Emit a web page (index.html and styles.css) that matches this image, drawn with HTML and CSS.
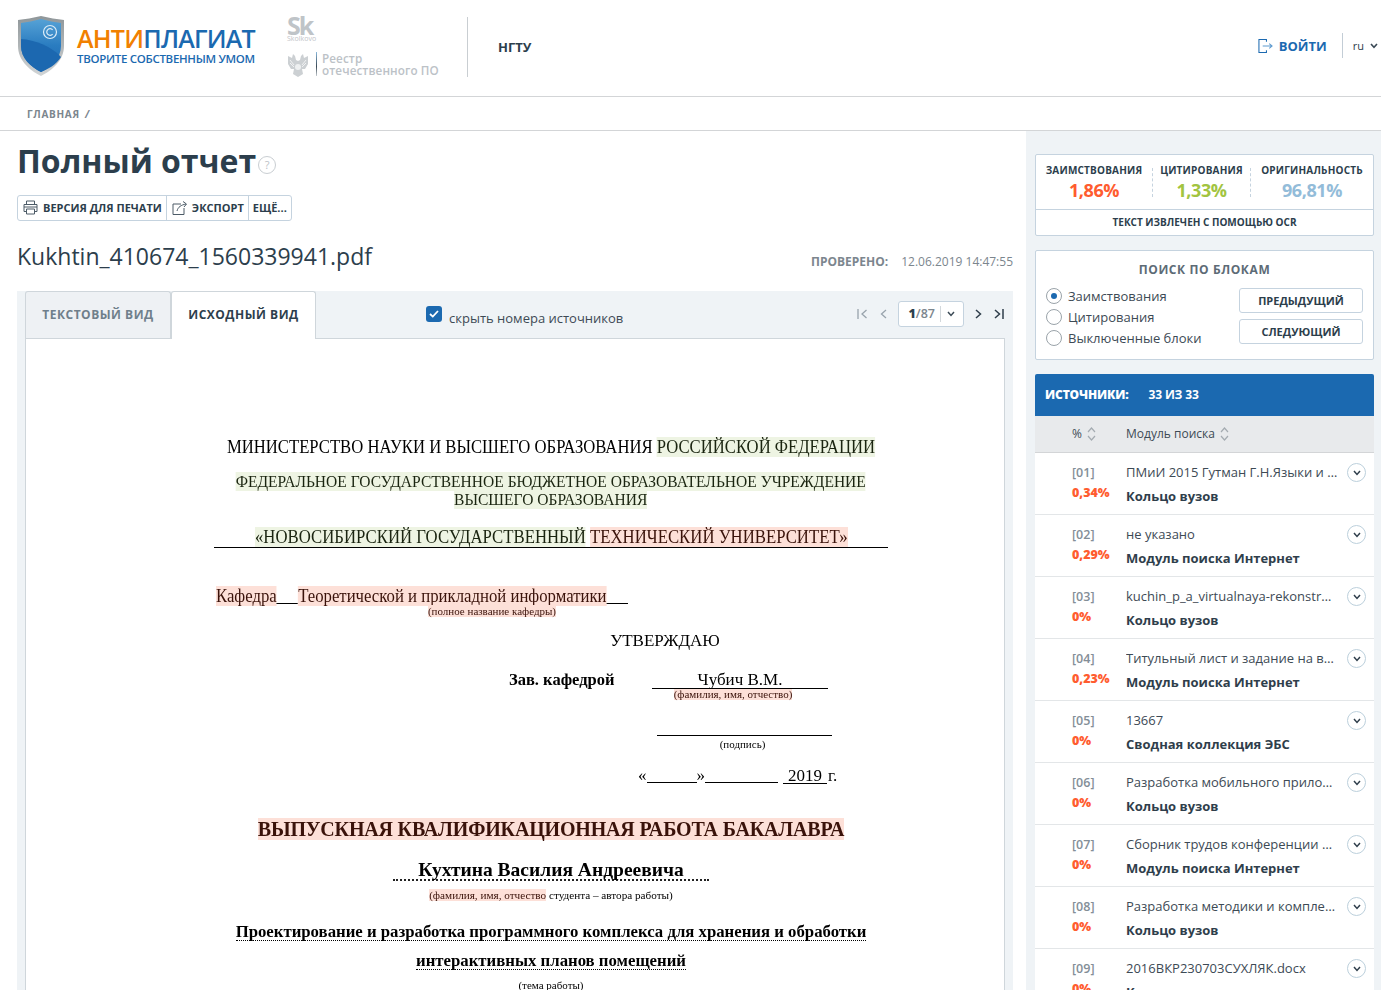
FILE: index.html
```html
<!DOCTYPE html><html lang="ru">
<head>
  <meta charset="UTF-8" />
  <meta name="viewport" content="width=device-width, initial-scale=1.0" />
  <title>Полный отчет</title>
  <link rel="stylesheet" href="styles.css">
</head>
<body>
  <header class="topbar">
    <div class="logo">
      <svg class="shield" width="48" height="62" viewBox="0 0 48 62">
        <defs>
          <linearGradient id="rim" x1="0" y1="0" x2="0" y2="1"><stop offset="0" stop-color="#8f9699"/><stop offset="1" stop-color="#d2d5d6"/></linearGradient>
          <linearGradient id="blue" x1="0" y1="0" x2="0" y2="1"><stop offset="0" stop-color="#56a2d6"/><stop offset="0.5" stop-color="#2a7cc0"/><stop offset="1" stop-color="#1c68b0"/></linearGradient>
        </defs>
        <path d="M24 1 C32 3 40 4 47 5 L47 31 C47 45 36 55 24 61 C12 55 1 45 1 31 L1 5 C8 4 16 3 24 1 Z" fill="url(#rim)"/>
        <path d="M24 4 C31 6 38 7 44 8 L44 31 C44 43 34 52 24 57 C14 52 4 43 4 31 L4 8 C10 7 17 6 24 4 Z" fill="url(#blue)"/>
        <path d="M4 24 C18 25 34 31 44 42 C39 50 31 54 24 57 C14 52 4 43 4 31 Z" fill="#1c68b0"/>
        <circle cx="33" cy="17" r="6.5" fill="none" stroke="#dcecf7" stroke-width="1.2"/>
        <path d="M35.6 14.9 A3.3 3.3 0 1 0 35.6 19.1" fill="none" stroke="#dcecf7" stroke-width="1.2"/>
      </svg>
      <div class="logo-text">
        <div class="logo-name"><span class="orange">АНТИ</span>ПЛАГИАТ</div>
        <div class="logo-tag">ТВОРИТЕ СОБСТВЕННЫМ УМОМ</div>
      </div>
    </div>
    <div class="partners">
      <div class="sk">Sk<small>Skolkovo</small></div>
      <div class="registry">
        <svg width="22" height="24" viewBox="0 0 22 24">
          <path d="M6 1 L8 3 L9 7 L11 8 L13 7 L14 3 L16 1 L17 5 L21 3 L21 11 L18 16 L15 16 L16 21 L11 24 L6 21 L7 16 L4 16 L1 11 L1 3 L5 5 Z" fill="#ccd0d3"/>
          <path d="M3 7 L7 12 M3 10 L7 14 M19 7 L15 12 M19 10 L15 14" stroke="#f1f2f3" fill="none"/>
          <circle cx="11" cy="14" r="3" fill="#eef0f1"/>
        </svg>
        <div class="registry-text">Реестр<br>отечественного ПО</div>
      </div>
    </div>
    <div class="org">НГТУ</div>
    <div class="login">
      <svg width="15" height="16" viewBox="0 0 16 16" fill="none" stroke="#1b69b0" stroke-width="1.1">
        <path d="M9 3.5 V1 H1 V15 H9 V12.5"/>
        <path d="M5 8 H15 M12 5.5 L15 8 L12 10.5" stroke="#5f9bd0"/>
      </svg>
      <span>ВОЙТИ</span>
    </div>
    <div class="lang">ru
      <svg width="8" height="6" viewBox="0 0 8 6" fill="none" stroke="#3b4a56" stroke-width="1.6"><path d="M1 1 L4 4.4 L7 1"/></svg>
    </div>
  </header>

  <nav class="crumbs">ГЛАВНАЯ <span>/</span></nav>

  <div class="content">
    <main class="report">
      <div class="title-row">
        <h1>Полный отчет</h1>
        <span class="help">?</span>
      </div>

      <div class="actions">
        <div class="action">
          <svg width="15" height="15" viewBox="0 0 15 15" fill="none" stroke="#4c5b67" stroke-width="1">
            <path d="M3.5 4.5 V1 H11.5 V4.5 M3.5 11.5 H1 V4.5 H14 V11.5 H11.5"/>
            <path d="M3.5 9 H11.5 V14 H3.5 Z M1 7 H14"/>
          </svg>
          ВЕРСИЯ ДЛЯ ПЕЧАТИ
        </div>
        <div class="action">
          <svg width="15" height="14" viewBox="0 0 15 14" fill="none" stroke="#4c5b67" stroke-width="1">
            <path d="M9 3 H1 V13.5 H12 V7"/>
            <path d="M5 10 C6 6 9 4 14 3 M11 0.5 L14.5 3 L12 6"/>
          </svg>
          ЭКСПОРТ
        </div>
        <div class="action">ЕЩЁ...</div>
      </div>

      <div class="file-row">
        <div class="file-name">Kukhtin_410674_1560339941.pdf</div>
        <div class="checked"><b>ПРОВЕРЕНО:</b><span>12.06.2019 14:47:55</span></div>
      </div>

      <section class="viewer">
        <div class="viewer-bar">
          <div class="tab">ТЕКСТОВЫЙ ВИД</div>
          <div class="tab active">ИСХОДНЫЙ ВИД</div>
          <label class="hide-nums">
            <span class="checkbox">
              <svg width="10" height="8" viewBox="0 0 10 8" fill="none" stroke="#fff" stroke-width="1.8"><path d="M1 4 L3.8 6.6 L9 1"/></svg>
            </span>
            скрыть номера источников
          </label>
          <div class="pager">
            <svg width="11" height="10" viewBox="0 0 11 10" fill="none" stroke="#98a3ac" stroke-width="1.3"><path d="M1 0 V10 M9.5 1 L5 5 L9.5 9"/></svg>
            <svg class="prev" width="7" height="10" viewBox="0 0 7 10" fill="none" stroke="#98a3ac" stroke-width="1.3"><path d="M6 1 L1.5 5 L6 9"/></svg>
            <div class="page-select">
              <span class="page-num"><b>1</b>/87</span>
              <svg width="8" height="6" viewBox="0 0 8 6" fill="none" stroke="#3b4a56" stroke-width="1.5"><path d="M1 1 L4 4.4 L7 1"/></svg>
            </div>
            <svg class="next" width="7" height="10" viewBox="0 0 7 10" fill="none" stroke="#2f3e4b" stroke-width="1.5"><path d="M1 1 L5.5 5 L1 9"/></svg>
            <svg class="last" width="10" height="10" viewBox="0 0 10 10" fill="none" stroke="#2f3e4b" stroke-width="1.5"><path d="M1 1 L5.5 5 L1 9 M9 0 V10"/></svg>
          </div>
        </div>

        <article class="page">
          <div class="line l-ministry"><span class="sq">МИНИСТЕРСТВО НАУКИ И ВЫСШЕГО ОБРАЗОВАНИЯ <mark class="g">РОССИЙСКОЙ ФЕДЕРАЦИИ</mark></span></div>
          <div class="line l-federal"><span class="sq"><mark class="g">ФЕДЕРАЛЬНОЕ ГОСУДАРСТВЕННОЕ БЮДЖЕТНОЕ ОБРАЗОВАТЕЛЬНОЕ УЧРЕЖДЕНИЕ</mark></span></div>
          <div class="line l-higher"><span class="sq"><mark class="g">ВЫСШЕГО ОБРАЗОВАНИЯ</mark></span></div>
          <div class="line l-uni"><div class="uni"><span class="sq"><mark class="g">«НОВОСИБИРСКИЙ ГОСУДАРСТВЕННЫЙ</mark> <mark class="r">ТЕХНИЧЕСКИЙ УНИВЕРСИТЕТ»</mark></span></div></div>
          <div class="line l-dept"><span class="sq"><mark class="r">Кафедра</mark><u class="fill-a"></u><mark class="r">Теоретической и прикладной информатики</mark><u class="fill-b"></u></span></div>
          <div class="line l-small l-dept-note"><mark class="r">(полное название кафедры)</mark></div>
          <div class="line l-approve">УТВЕРЖДАЮ</div>
          <div class="line l-head"><b>Зав. кафедрой</b><span class="head-name">Чубич В.М.</span></div>
          <div class="line l-small l-head-note"><mark class="r">(фамилия, имя, отчество)</mark></div>
          <div class="sign-line"></div>
          <div class="line l-small l-sign-note">(подпись)</div>
          <div class="line l-date">«<u class="fill-c"></u>»<u class="fill-d"></u><u class="year">2019</u>г.</div>
          <div class="line l-work"><mark class="r">ВЫПУСКНАЯ КВАЛИФИКАЦИОННАЯ РАБОТА БАКАЛАВРА</mark></div>
          <div class="line l-student"><span class="student">Кухтина Василия Андреевича</span></div>
          <div class="line l-small l-student-note"><mark class="r">(фамилия, имя, отчество</mark> студента – автора работы)</div>
          <div class="line l-topic"><span class="dots">Проектирование и разработка программного комплекса для хранения и обработки</span></div>
          <div class="line l-topic2"><span class="dots">интерактивных планов помещений</span></div>
          <div class="line l-small l-topic-note">(тема работы)</div>
        </article>
      </section>
    </main>

    <aside class="side">
      <div class="card stats">
        <div class="stat-row">
          <div class="stat"><div class="stat-name">ЗАИМСТВОВАНИЯ</div><div class="stat-val red">1,86%</div></div>
          <i class="stat-sep"></i>
          <div class="stat"><div class="stat-name">ЦИТИРОВАНИЯ</div><div class="stat-val green">1,33%</div></div>
          <i class="stat-sep"></i>
          <div class="stat"><div class="stat-name">ОРИГИНАЛЬНОСТЬ</div><div class="stat-val blue">96,81%</div></div>
        </div>
        <div class="ocr">ТЕКСТ ИЗВЛЕЧЕН С ПОМОЩЬЮ OCR</div>
      </div>

      <div class="card blocks">
        <div class="blocks-title">ПОИСК ПО БЛОКАМ</div>
        <div class="blocks-body">
          <div class="radios">
            <div class="radio on"><i></i>Заимствования</div>
            <div class="radio"><i></i>Цитирования</div>
            <div class="radio"><i></i>Выключенные блоки</div>
          </div>
          <div class="block-btns">
            <div class="btn">ПРЕДЫДУЩИЙ</div>
            <div class="btn">СЛЕДУЮЩИЙ</div>
          </div>
        </div>
      </div>

      <div class="sources-head"><b>ИСТОЧНИКИ:</b><span>33 ИЗ 33</span></div>
      <div class="sources-cols">
        <div class="col-pct">%
          <svg width="9" height="16" viewBox="0 0 9 16" fill="none" stroke="#a4abb1" stroke-width="1.2"><path d="M1 6 L4.5 2 L8 6 M1 10 L4.5 14 L8 10"/></svg>
        </div>
        <div class="col-mod">Модуль поиска
          <svg width="9" height="16" viewBox="0 0 9 16" fill="none" stroke="#a4abb1" stroke-width="1.2"><path d="M1 6 L4.5 2 L8 6 M1 10 L4.5 14 L8 10"/></svg>
        </div>
      </div>

      <div class="source"><div class="src-num">[01]<b>0,34%</b></div><div class="src-main"><div class="src-title">ПМиИ 2015 Гутман Г.Н.Языки и программирование</div><div class="src-mod">Кольцо вузов</div></div><span class="toggle"><svg width="8" height="6" viewBox="0 0 8 6" fill="none" stroke="#2f3e4b" stroke-width="1.5"><path d="M1 1 L4 4.4 L7 1"/></svg></span></div>
      <div class="source"><div class="src-num">[02]<b>0,29%</b></div><div class="src-main"><div class="src-title">не указано</div><div class="src-mod">Модуль поиска Интернет</div></div><span class="toggle"><svg width="8" height="6" viewBox="0 0 8 6" fill="none" stroke="#2f3e4b" stroke-width="1.5"><path d="M1 1 L4 4.4 L7 1"/></svg></span></div>
      <div class="source"><div class="src-num">[03]<b>0%</b></div><div class="src-main"><div class="src-title">kuchin_p_a_virtualnaya-rekonstruktsiya-obektov</div><div class="src-mod">Кольцо вузов</div></div><span class="toggle"><svg width="8" height="6" viewBox="0 0 8 6" fill="none" stroke="#2f3e4b" stroke-width="1.5"><path d="M1 1 L4 4.4 L7 1"/></svg></span></div>
      <div class="source"><div class="src-num">[04]<b>0,23%</b></div><div class="src-main"><div class="src-title">Титульный лист и задание на выпускную работу</div><div class="src-mod">Модуль поиска Интернет</div></div><span class="toggle"><svg width="8" height="6" viewBox="0 0 8 6" fill="none" stroke="#2f3e4b" stroke-width="1.5"><path d="M1 1 L4 4.4 L7 1"/></svg></span></div>
      <div class="source"><div class="src-num">[05]<b>0%</b></div><div class="src-main"><div class="src-title">13667</div><div class="src-mod">Сводная коллекция ЭБС</div></div><span class="toggle"><svg width="8" height="6" viewBox="0 0 8 6" fill="none" stroke="#2f3e4b" stroke-width="1.5"><path d="M1 1 L4 4.4 L7 1"/></svg></span></div>
      <div class="source"><div class="src-num">[06]<b>0%</b></div><div class="src-main"><div class="src-title">Разработка мобильного приложения для планшетов</div><div class="src-mod">Кольцо вузов</div></div><span class="toggle"><svg width="8" height="6" viewBox="0 0 8 6" fill="none" stroke="#2f3e4b" stroke-width="1.5"><path d="M1 1 L4 4.4 L7 1"/></svg></span></div>
      <div class="source"><div class="src-num">[07]<b>0%</b></div><div class="src-main"><div class="src-title">Сборник трудов конференции молодых ученых</div><div class="src-mod">Модуль поиска Интернет</div></div><span class="toggle"><svg width="8" height="6" viewBox="0 0 8 6" fill="none" stroke="#2f3e4b" stroke-width="1.5"><path d="M1 1 L4 4.4 L7 1"/></svg></span></div>
      <div class="source"><div class="src-num">[08]<b>0%</b></div><div class="src-main"><div class="src-title">Разработка методики и комплекса программ</div><div class="src-mod">Кольцо вузов</div></div><span class="toggle"><svg width="8" height="6" viewBox="0 0 8 6" fill="none" stroke="#2f3e4b" stroke-width="1.5"><path d="M1 1 L4 4.4 L7 1"/></svg></span></div>
      <div class="source"><div class="src-num">[09]<b>0%</b></div><div class="src-main"><div class="src-title">2016ВКР230703СУХЛЯК.docx</div><div class="src-mod">Кольцо вузов</div></div><span class="toggle"><svg width="8" height="6" viewBox="0 0 8 6" fill="none" stroke="#2f3e4b" stroke-width="1.5"><path d="M1 1 L4 4.4 L7 1"/></svg></span></div>
    </aside>
  </div>
</body>
</html>
```

FILE: styles.css
```css
html, body { margin: 0; height: 990px; overflow: hidden; }
body { font-family: "Open Sans", sans-serif; color: #2c3e4c; background: #fff; font-size: 13px; }

/* header */
.topbar { height: 96px; border-bottom: 1px solid #d3d5d7; display: flex; align-items: flex-start; }
.logo { display: flex; margin: 15px 0 0 17px; width: 270px; }
.logo-text { margin: 9px 0 0 12px; }
.logo-name { font-size: 25px; line-height: 28px; font-weight: 600; color: #1b69b0; letter-spacing: -0.75px; }
.orange { color: #f18000; }
.logo-tag { font-size: 11.5px; line-height: 14px; font-weight: 600; color: #1b69b0; white-space: nowrap; letter-spacing: -0.3px; }
.partners { width: 180px; height: 64px; margin-top: 14px; color: #bcc2c7; }
.sk { font-size: 25px; line-height: 22px; font-weight: 700; letter-spacing: -2px; color: #bfc4c8; width: 40px; }
.sk small { display: block; font-size: 7px; line-height: 6px; font-weight: 400; letter-spacing: 0; }
.registry { display: flex; margin-top: 10px; }
.registry svg { margin: 1px 7px 0 0; }
.registry-text { border-left: 1px solid; border-image: linear-gradient(#8fc0e6, #3b4a56 60%, #d5dade) 1; padding-left: 5px; font-size: 11.7px; line-height: 12px; font-weight: 600; height: 24px; color: #bcc2c7; letter-spacing: 0.1px; white-space: nowrap; }
.org { border-left: 1px solid #c9ced2; height: 60px; margin-top: 17px; padding-left: 30px; line-height: 60px; font-weight: 700; font-size: 13px; }
.login { margin: 38px 0 0 auto; display: flex; align-items: center; color: #1b69b0; font-weight: 700; font-size: 13px; line-height: 16px; }
.login span { margin-left: 6px; }
.lang { margin: 33px 3px 0 15px; border-left: 1px solid #c3cdd6; height: 25px; padding-left: 10px; line-height: 26px; font-size: 11px; display: flex; align-items: center; }
.lang svg { margin-left: 6px; }

.crumbs { height: 33px; border-bottom: 1px solid #d3d5d7; padding-left: 27px; line-height: 34px; font-size: 10px; font-weight: 700; letter-spacing: 0.7px; color: #7c868e; }
.crumbs span { margin-left: 2px; font-style: italic; }

.content { display: flex; }

/* left part */
.report { width: 1026px; box-sizing: border-box; padding: 8px 13px 0 17px; }
.title-row { display: flex; align-items: flex-end; height: 44px; }
h1 { margin: 0; font-size: 32px; line-height: 44px; font-weight: 700; color: #2c3e4c; }
.help { width: 16px; height: 16px; margin: 0 0 9px 2px; border: 1px solid #c9ced2; border-radius: 50%; color: #bcc2c7; font-size: 11px; line-height: 16px; text-align: center; }
.actions { display: inline-flex; height: 24px; margin-top: 12px; border: 1px solid #c5d3df; border-radius: 3px; }
.action { display: flex; align-items: center; padding: 0 4px 1px 5px; border-left: 1px solid #c5d3df; font-size: 11px; font-weight: 700; white-space: nowrap; }
.action:first-child { border-left: 0; }
.action:last-child { padding-left: 4px; }
.action svg { margin-right: 5px; }
.file-row { display: flex; justify-content: space-between; align-items: center; height: 36px; margin-top: 17px; }
.file-name { font-size: 23px; line-height: 36px; color: #2c3e4c; }
.checked { font-size: 12px; color: #7c868e; margin-top: 10px; }
.checked span { margin-left: 13px; }
.viewer { margin-top: 17px; padding: 0 8px; background: #eff3f6; }
.viewer-bar { display: flex; height: 47px; }
.tab { width: 146px; box-sizing: border-box; border: 1px solid #cfd6db; border-bottom: 0; border-radius: 3px 3px 0 0; text-align: center; line-height: 45px; font-size: 12px; font-weight: 700; letter-spacing: 0.5px; color: #6f7f8b; background: #eef1f4; }
.tab.active { width: 145px; background: #fff; color: #2c3e4c; position: relative; z-index: 1; height: 48px; }
.hide-nums { display: flex; align-items: flex-start; margin-left: 110px; padding-top: 19px; font-size: 13px; line-height: 16px; color: #3d4a55; }
.checkbox { width: 16px; height: 16px; margin: -4px 7px 0 0; border-radius: 3px; background: #1b69b0; display: flex; align-items: center; justify-content: center; }
.pager { margin-left: auto; display: flex; align-items: center; padding-bottom: 1px; margin-right: 1px; }
.prev { margin: 0 11px 0 12px; }
.page-select { width: 64px; height: 24px; margin-right: 11px; border: 1px solid #c5d3df; border-radius: 3px; background: #fff; display: flex; align-items: center; font-size: 12.5px; font-weight: 600; color: #7c868e; }
.page-num { width: 42px; height: 16px; margin-right: 6px; padding-right: 5px; box-sizing: border-box; line-height: 16px; text-align: right; border-right: 1px solid #d3d8dc; }
.page-num b { color: #2c3e4c; }
.next { margin-right: 12px; }

/* scanned document */
.page { height: 652px; width: 906px; padding-left: 72px; background: #fff; border: 1px solid #cfd6db; border-bottom: 0; font-family: "Liberation Serif", serif; color: #000; overflow: hidden; text-align: center; }
.line { white-space: nowrap; height: 20px; line-height: 20px; font-size: 18px; filter: blur(0.25px); }
.sq { display: inline-block; }
mark.g { background: #eef4e3; color: #1a2410; }
mark.r { background: #fde0d8; color: #3a120a; }
.l-ministry { margin-top: 98px; }
.l-ministry .sq { transform: scaleX(0.926); }
.l-federal { margin-top: 16px; font-size: 17px; height: 18px; line-height: 18px; }
.l-federal .sq, .l-higher .sq { transform: scaleX(0.914); }
.l-higher { font-size: 17px; height: 18px; line-height: 18px; }
.l-uni { margin-top: 18px; height: 21px; }
.l-uni .sq { transform: scaleX(0.931); }
.uni { width: 674px; height: 20px; margin: 0 auto; border-bottom: 1px solid #000; }
.l-dept { margin-top: 38px; text-align: left; padding-left: 118px; }
.l-dept .sq { transform: scaleX(0.93); transform-origin: left center; }
.l-small { font-size: 11px; height: 14px; line-height: 14px; }
.l-dept-note { margin-top: -2px; padding-right: 118px; }
.l-approve { margin-top: 13px; font-size: 17px; padding-left: 228px; }
.l-head { margin-top: 19px; text-align: left; padding-left: 411px; font-size: 17px; height: 20px; position: relative; z-index: 1; }
.l-head b { font-size: 16.5px; display: inline-block; width: 143px; }
.head-name { display: inline-block; width: 176px; text-align: center; border-bottom: 1px solid #000; line-height: 16px; }
.l-head-note { margin-top: -3px; padding-left: 364px; }
.sign-line { width: 175px; height: 0; margin: 34px 0 0 559px; border-top: 1px solid #000; }
.l-sign-note { margin-top: 1px; padding-left: 383px; }
.l-date { margin-top: 15px; font-size: 17px; text-align: left; padding-left: 540px; }
.l-work { margin-top: 32px; font-size: 20px; font-weight: 700; height: 22px; line-height: 22px; letter-spacing: -0.18px; }
.l-student { margin-top: 19px; font-size: 19.5px; font-weight: 700; height: 22px; line-height: 22px; }
.student { display: inline-block; width: 316px; line-height: 18px; border-bottom: 2px dotted #222; }
.l-student-note { margin-top: 7px; font-size: 11.2px; }
.l-topic { margin-top: 20px; font-size: 16.75px; font-weight: 700; }
.l-topic2 { margin-top: 9px; font-size: 16.75px; font-weight: 700; }
.dots { border-bottom: 1px dotted #000; line-height: 17px; display: inline-block; }
.l-topic-note { margin-top: 7px; }
u { display: inline-block; border-bottom: 1px solid #000; height: 14px; text-decoration: none; vertical-align: -2px; }
.fill-a { width: 23px; }
.fill-b { width: 23px; }
.fill-c { width: 50px; }
.fill-d { width: 73px; margin-right: 5px; }
.year { height: auto; line-height: 15px; width: 44px; text-align: center; margin-right: 1px; vertical-align: baseline; }

/* right part */
.side { width: 355px; box-sizing: border-box; background: #eff3f6; padding: 23px 7px 0 9px; }
.card { background: #fff; border: 1px solid #c5d3df; border-radius: 2px; }
.stat-row { display: flex; height: 54px; border-bottom: 1px solid #c5d3df; }
.stat { text-align: center; margin-top: 8px; }
.stat:nth-child(1) { width: 116px; }
.stat:nth-child(3) { width: 97px; }
.stat:nth-child(5) { width: 122px; }
.stat-sep { margin-top: 13px; height: 29px; border-left: 1px dashed #c5d3df; }
.stat-name { font-size: 10px; line-height: 15px; font-weight: 700; letter-spacing: 0.2px; color: #2c3e4c; }
.stat-val { font-size: 18px; line-height: 24px; font-weight: 700; letter-spacing: -0.4px; }
.red { color: #ff5c2f; }
.green { color: #a2c441; }
.blue { color: #93bcd9; }
.ocr { height: 25px; line-height: 25px; text-align: center; font-size: 10px; font-weight: 700; color: #2c3e4c; }
.blocks { margin-top: 14px; height: 108px; }
.blocks-title { margin-top: 11px; text-align: center; font-size: 12px; line-height: 16px; font-weight: 700; letter-spacing: 0.6px; color: #5d6b76; }
.blocks-body { display: flex; justify-content: space-between; padding: 9px 10px 0 10px; }
.radios { margin-top: -2px; }
.radio { display: flex; align-items: center; height: 21px; font-size: 13px; color: #3d4a55; }
.radio i { width: 14px; height: 14px; margin-right: 6px; border: 1px solid #9aa3a9; border-radius: 50%; display: block; position: relative; }
.radio.on i::after { content: ""; position: absolute; left: 4px; top: 4px; width: 6px; height: 6px; border-radius: 50%; background: #1b69b0; }
.block-btns { margin-top: 1px; }
.btn { width: 122px; height: 23px; line-height: 23px; margin-bottom: 6px; border: 1px solid #c5d3df; border-radius: 3px; text-align: center; font-size: 11px; font-weight: 700; color: #2c3e4c; }
.sources-head { margin-top: 14px; height: 42px; background: #1b69b0; border-radius: 2px 2px 0 0; color: #fff; font-size: 12px; font-weight: 700; line-height: 41px; padding-left: 10px; letter-spacing: -0.15px; }
.sources-head span { margin-left: 20px; }
.sources-cols { height: 36px; border-bottom: 1px solid #d3d5d7; background: #e8eaec; display: flex; align-items: center; font-size: 12px; color: #3d4a55; }
.col-pct { width: 54px; margin-left: 37px; display: flex; align-items: center; margin-top: -1px; }
.col-pct svg, .col-mod svg { margin-left: 5px; }
.col-mod { display: flex; align-items: center; margin-top: -1px; }
.source { height: 61px; border-bottom: 1px solid #e3e6e8; background: #fff; display: flex; }
.src-num { width: 54px; margin-left: 37px; padding-top: 11px; font-size: 12.5px; line-height: 17px; font-weight: 600; color: #838e97; }
.src-num b { display: block; margin-top: 3px; color: #ff5c2f; }
.src-main { width: 212px; padding-top: 9px; }
.src-title { font-size: 13px; line-height: 20px; color: #3d4a55; white-space: nowrap; overflow: hidden; text-overflow: ellipsis; }
.src-mod { margin-top: 4px; font-size: 13px; line-height: 20px; font-weight: 700; color: #2f3e4b; white-space: nowrap; }
.toggle { width: 17px; height: 17px; margin: 10px 0 0 9px; border: 1px solid #bcd0dc; border-radius: 50%; display: flex; align-items: center; justify-content: center; }
```
